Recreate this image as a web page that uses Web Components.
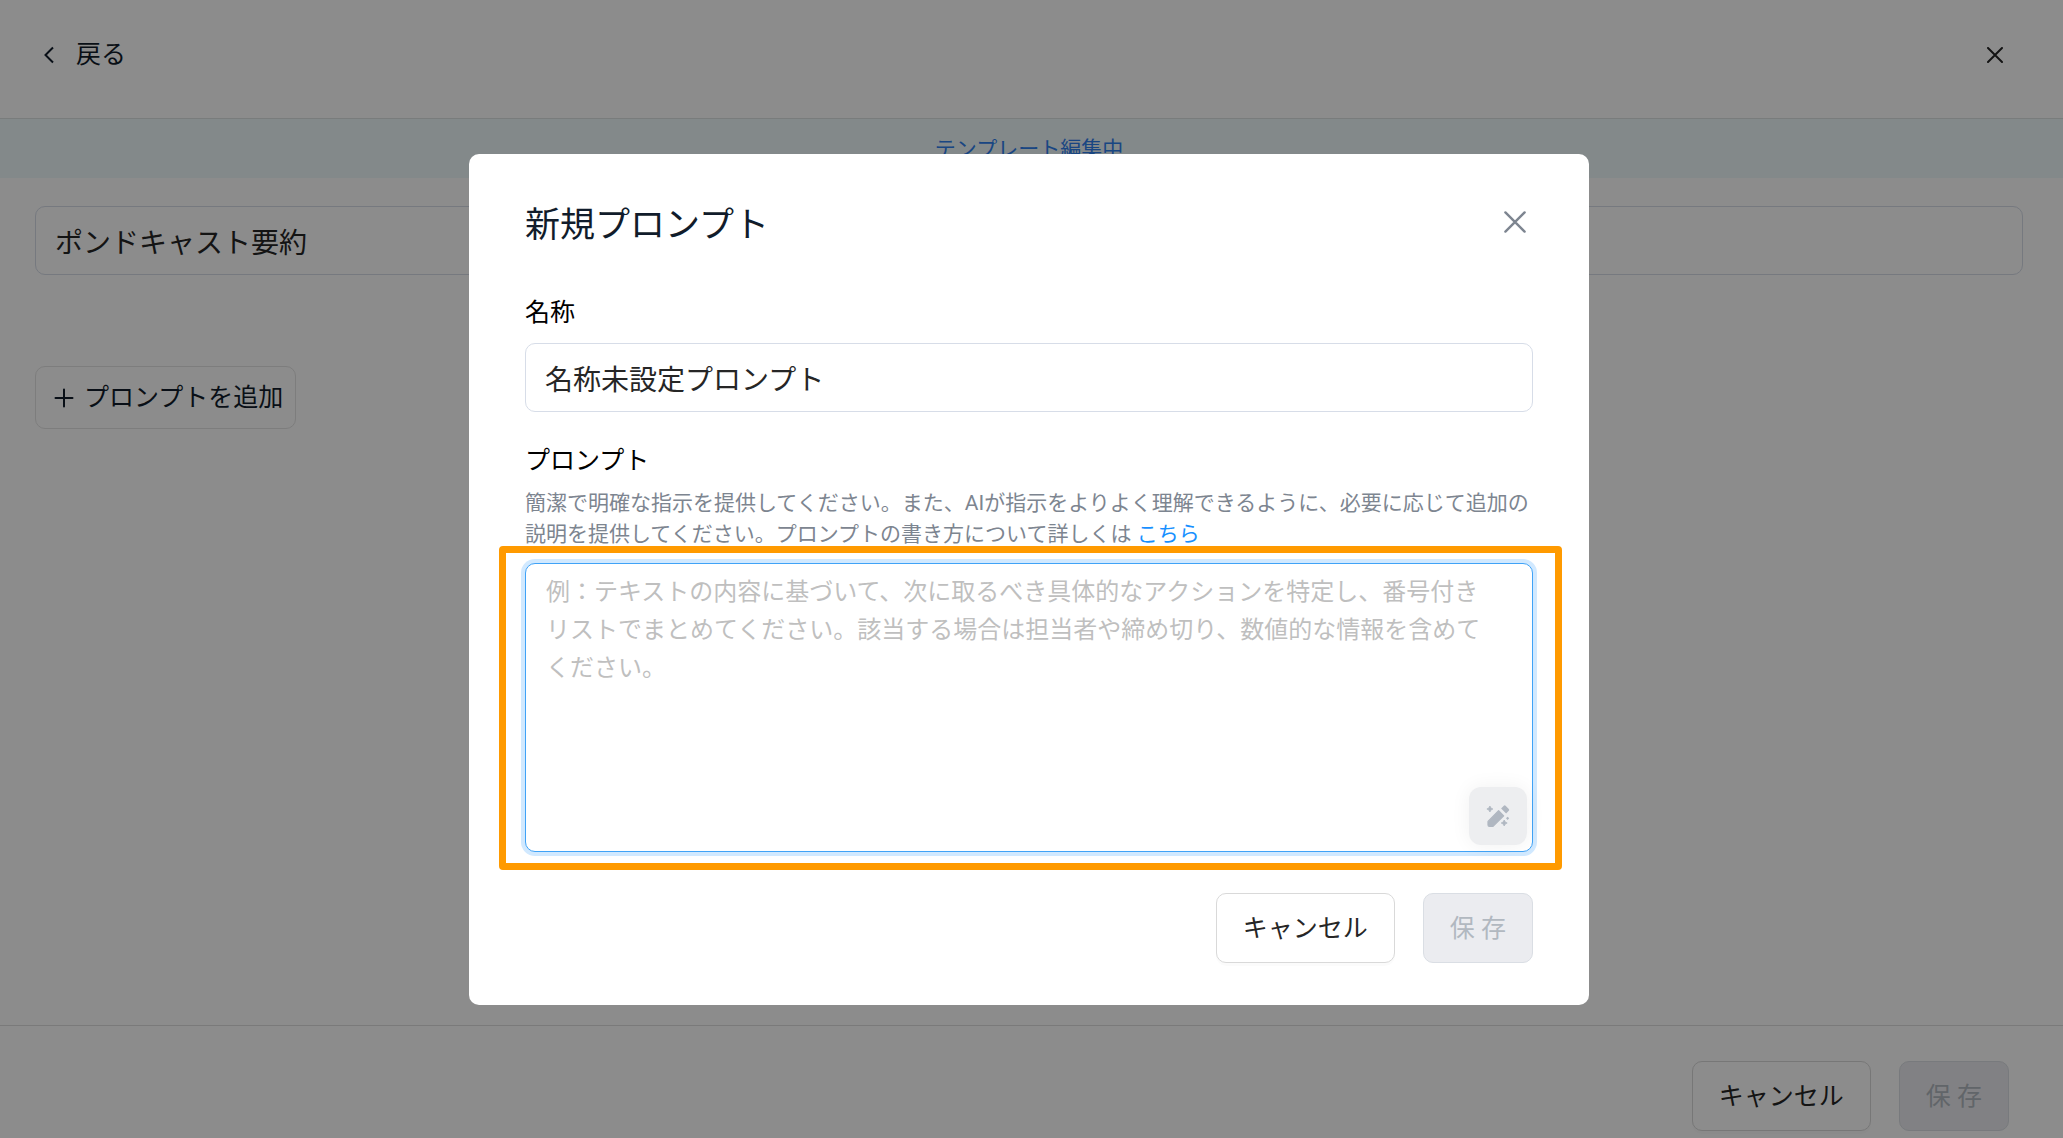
<!DOCTYPE html>
<html lang="ja">
<head>
<meta charset="utf-8">
<title>テンプレート編集</title>
<style>
  html, body { margin: 0; height: 100%; }
  body {
    font-family: Roboto, "Noto Sans CJK JP", sans-serif;
    font-size: 25px;
    line-height: 38px;
    font-weight: 400;
    color: #262626;
    background: #fff;
    overflow: hidden;
  }
</style>
</head>
<body>
<template-editor></template-editor>
<prompt-dialog></prompt-dialog>

<script>
function define(name, markup, setup) {
  const template = document.createElement('template');
  template.innerHTML = markup;
  customElements.define(name, class extends HTMLElement {
    constructor() {
      super();
      this.attachShadow({ mode: 'open' }).append(template.content.cloneNode(true));
    }
    connectedCallback() { if (setup) setup(this, this.shadowRoot); }
  });
}

/* Push button; "disabled" greys it out, "compact" is the tighter variant with an icon */
define('ui-button', `
  <style>
    :host { display: block; flex: none; }
    button {
      display: flex; align-items: center; gap: 10px;
      box-sizing: border-box; height: 70px; padding: 2px 26px 0;
      font: inherit; color: #262626; white-space: pre;
      background: #fff; border: 1px solid #d9d9d9; border-radius: 10px;
      box-shadow: 0 3px 0 rgba(0, 0, 0, .016);
    }
    button:disabled { color: #b1b8c0; background: #ebecf0; border-color: #dadee4; box-shadow: none; }
    :host([compact]) button { height: 63px; padding: 0 12px 0 18px; color: #111c2b; border-color: #e4e4e4; box-shadow: none; }
    ::slotted(svg) { flex: none; }
  </style>
  <button type="button"><slot name="icon"></slot><slot></slot></button>`,
  (host, root) => { root.querySelector('button').disabled = host.hasAttribute('disabled'); });

/* Borderless button around an icon */
define('icon-button', `
  <style>
    :host { display: block; flex: none; }
    button { display: flex; align-items: center; gap: 18px; margin: 0; padding: 0; border: 0; background: none; font: inherit; color: inherit; }
  </style>
  <button type="button"><slot></slot></button>`,
  (host, root) => root.querySelector('button').setAttribute('aria-label', host.getAttribute('label')));

/* Single-line text field with an optional visible label */
define('text-field', `
  <style>
    :host { display: block; }
    label { display: block; margin-bottom: 11px; color: #000; }
    label:empty { display: none; }
    input {
      display: block; box-sizing: border-box; width: 100%; height: 69px; padding: 0 19px;
      font: inherit; font-size: 28px; color: #262626; background: #fff;
      border: 1px solid #d7dde8; border-radius: 10px; outline: 0;
    }
  </style>
  <label for="field"></label>
  <input id="field" type="text">`,
  (host, root) => {
    const input = root.querySelector('input');
    root.querySelector('label').textContent = host.getAttribute('label') || '';
    input.value = host.getAttribute('value') || '';
    if (!host.hasAttribute('label')) input.setAttribute('aria-label', host.getAttribute('name'));
  });

/* Large text box with the magic-pen helper in its corner */
define('prompt-area', `
  <style>
    :host { display: block; position: relative; }
    textarea {
      display: block; box-sizing: border-box; width: 100%; height: 289px; padding: 9px 42px 9px 20px;
      font: inherit; font-size: 24px; line-height: 38px; color: #262626; background: #fff; resize: none; overflow: hidden;
      border: 1px solid #40a3f7; border-radius: 10px; outline: 0; box-shadow: 0 0 0 4px #d1e9ff;
    }
    textarea::placeholder { color: #bfbfbf; opacity: 1; }
    button {
      position: absolute; right: 6px; bottom: 7px;
      display: grid; place-items: center; width: 58px; height: 58px; padding: 0;
      border: 0; border-radius: 12px; background: #edeef0; color: #b0b7c1;
      box-shadow: 0 0 20px rgba(0, 0, 0, .06);
    }
    .marker {
      position: absolute; inset: -17px -29px -18px -26px; pointer-events: none;
      border: 7px solid #ff9a00; border-radius: 4px;
    }
  </style>
  <textarea aria-label="プロンプト" placeholder="例：テキストの内容に基づいて、次に取るべき具体的なアクションを特定し、番号付きリストでまとめてください。該当する場合は担当者や締め切り、数値的な情報を含めてください。"></textarea>
  <button type="button" aria-label="プロンプトを改善" disabled>
    <svg width="24" height="24" viewBox="0 0 24 24" fill="currentColor">
      <path d="M2 17.4V21Q2 22.4 3.4 22.4H7L17.7 11.8L12.6 6.7Z" stroke="currentColor" stroke-width="1.2" stroke-linejoin="round"/>
      <path d="M15.1 4.4L17.8 1.7Q18.7 .8 19.6 1.7L22.8 4.9Q23.7 5.8 22.8 6.7L20.1 9.4Z"/>
      <path d="M3.9 2L4.9 4L6.9 5L4.9 6L3.9 8L2.9 6L.9 5L2.9 4Z" stroke="currentColor" stroke-width=".8"/>
      <path d="M18.2 16L19.2 18L21.2 19L19.2 20L18.2 22L17.2 20L15.2 19L17.2 18Z" stroke="currentColor" stroke-width=".8"/>
      <path d="M21.6 12.7L23.2 14.3L21.6 15.9L20 14.3Z"/>
    </svg>
  </button>
  <div class="marker"></div>`);

/* Page behind the dialog */
define('template-editor', `
  <style>
    :host { display: flex; flex-direction: column; height: 100%; background: #fff; }
    header, main, footer { padding: 0 40px 0 35px; }
    header {
      display: flex; align-items: center; justify-content: space-between;
      box-sizing: border-box; height: 119px; padding: 0 60px 8px 40px; color: #111c2b; border-bottom: 1px solid #dde2e2;
    }
    .banner {
      height: 59px; padding-right: 5px; line-height: 61px; font-size: 21px; text-align: center;
      color: #2f80ed; background: #eff9fc;
    }
    main { flex: 1; display: flex; flex-direction: column; align-items: flex-start; gap: 91px; padding-top: 28px; }
    text-field { width: 100%; }
    footer { display: flex; justify-content: flex-end; gap: 28px; padding: 35px 54px 7px 35px; border-top: 1px solid #dfdfdf; }
  </style>
  <header>
    <icon-button label="戻る">
      <svg width="18" height="24" viewBox="0 0 18 24" fill="none" stroke="currentColor" stroke-width="2"><path d="M13 4.5L5.5 12L13 19.5"/></svg>
      <span>戻る</span>
    </icon-button>
    <icon-button label="閉じる">
      <svg width="16" height="16" viewBox="0 0 16 16" fill="none" stroke="#262626" stroke-width="2" stroke-linecap="round"><path d="M1 1L15 15M15 1L1 15"/></svg>
    </icon-button>
  </header>
  <div class="banner">テンプレート編集中</div>
  <main>
    <text-field name="テンプレート名" value="ポンドキャスト要約"></text-field>
    <ui-button compact>
      <svg slot="icon" width="20" height="20" viewBox="0 0 20 20" fill="none" stroke="currentColor" stroke-width="2" stroke-linecap="round"><path d="M10 1.5V18.5M1.5 10H18.5"/></svg>プロンプトを追加</ui-button>
  </main>
  <footer>
    <ui-button>キャンセル</ui-button>
    <ui-button disabled>保 存</ui-button>
  </footer>`);

/* Dimmed layer and the dialog on top of it */
define('prompt-dialog', `
  <style>
    :host {
      position: fixed; inset: 0; display: flex; justify-content: center; align-items: flex-start;
      padding: 154px 5px 0 0; background: rgba(0, 0, 0, .45);
    }
    section { box-sizing: border-box; width: 1120px; max-width: 100%; padding: 42px 56px; background: #fff; border-radius: 10px; }
    header { display: flex; align-items: flex-start; justify-content: space-between; margin-bottom: 38px; padding-right: 7px; color: #7d8590; }
    header icon-button { margin-top: 15px; }
    h2 { margin: 0; font-size: 35px; line-height: 60px; font-weight: inherit; color: #111c2b; }
    h3 { margin: 30px 0 8px; font-size: 25px; line-height: 38px; font-weight: inherit; color: #000; }
    p { margin: 0 0 13px; font-size: 21px; line-height: 31px; color: #7d8590; }
    a { color: #1890ff; text-decoration: none; }
    footer { display: flex; justify-content: flex-end; gap: 28px; margin-top: 41px; }
  </style>
  <section role="dialog" aria-modal="true" aria-labelledby="title">
    <header>
      <h2 id="title">新規プロンプト</h2>
      <icon-button label="閉じる">
        <svg width="22" height="22" viewBox="0 0 22 22" fill="none" stroke="currentColor" stroke-width="2.4" stroke-linecap="round"><path d="M1.4 1.4L20.6 20.6M20.6 1.4L1.4 20.6"/></svg>
      </icon-button>
    </header>
    <text-field label="名称" value="名称未設定プロンプト"></text-field>
    <h3>プロンプト</h3>
    <p>簡潔で明確な指示を提供してください。また、AIが指示をよりよく理解できるように、必要に応じて追加の説明を提供してください。プロンプトの書き方について詳しくは <a href="#guide">こちら</a></p>
    <prompt-area></prompt-area>
    <footer>
      <ui-button>キャンセル</ui-button>
      <ui-button disabled>保 存</ui-button>
    </footer>
  </section>`);
</script>
</body>
</html>
